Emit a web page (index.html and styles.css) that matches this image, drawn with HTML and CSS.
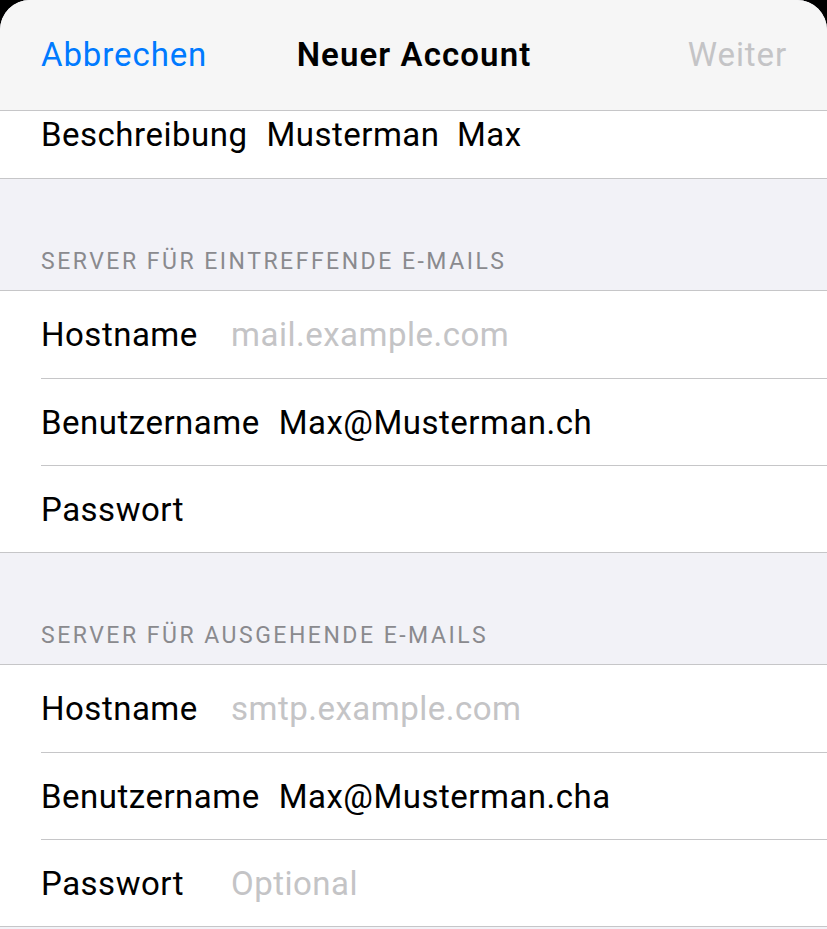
FILE: index.html
```html
<!DOCTYPE html>
<html lang="de">
<head>
<meta charset="utf-8">
<title>Neuer Account</title>
<link rel="stylesheet" href="styles.css">
</head>
<body>
<div class="sheet">
  <header class="nav">
    <span class="nav-btn nav-cancel">Abbrechen</span>
    <span class="nav-title">Neuer Account</span>
    <span class="nav-btn nav-next">Weiter</span>
  </header>
  <main class="list">
    <section class="group group-scrolled">
      <div class="row">
        <span class="label">Beschreibung</span>
        <span class="value">Musterman  Max</span>
      </div>
    </section>

    <div class="section-header">SERVER FÜR EINTREFFENDE E-MAILS</div>
    <section class="group">
      <div class="row">
        <span class="label">Hostname</span>
        <span class="value placeholder">mail.example.com</span>
      </div>
      <div class="row">
        <span class="label">Benutzername</span>
        <span class="value">Max@Musterman.ch</span>
      </div>
      <div class="row">
        <span class="label">Passwort</span>
        <span class="value"></span>
      </div>
    </section>

    <div class="section-header">SERVER FÜR AUSGEHENDE E-MAILS</div>
    <section class="group">
      <div class="row">
        <span class="label">Hostname</span>
        <span class="value placeholder">smtp.example.com</span>
      </div>
      <div class="row">
        <span class="label">Benutzername</span>
        <span class="value">Max@Musterman.cha</span>
      </div>
      <div class="row">
        <span class="label">Passwort</span>
        <span class="value placeholder">Optional</span>
      </div>
    </section>
  </main>
</div>
</body>
</html>
```
FILE: styles.css
```css
* { box-sizing: border-box; }
html, body {
  margin: 0;
  padding: 0;
  background: #000;
  height: 100%;
}
body {
  font-family: "Roboto", "Inter", "Liberation Sans", sans-serif;
  -webkit-font-smoothing: antialiased;
}
.sheet {
  height: 929px;
  background: #f2f2f7;
  border-radius: 30px 30px 0 0;
  overflow: hidden;
  display: flex;
  flex-direction: column;
}
.nav {
  height: 111px;
  flex: none;
  background: #f6f6f6;
  border-bottom: 1px solid #c6c6c8;
  display: grid;
  grid-template-columns: 1fr auto 1fr;
  align-items: center;
  padding: 0 40px 2px 41px;
  font-size: 33px;
  letter-spacing: 0.9px;
}
.nav-btn { color: #007aff; }
.nav-next { color: #c4c4c6; justify-self: end; }
.nav-title { font-weight: 600; color: #000; letter-spacing: 1.1px; }
.list {
  flex: 1;
  overflow: hidden;
}
.group {
  background: #fff;
  border-top: 1px solid #c6c6c8;
  border-bottom: 1px solid #c6c6c8;
}
.group-scrolled {
  border-top: none;
  margin-top: -20px;
}
.row {
  height: 87px;
  display: flex;
  align-items: center;
  gap: 19px;
  margin-left: 41px;
  font-size: 33px;
  letter-spacing: 0.5px;
  color: #000;
  white-space: pre;
}
.row + .row { border-top: 1px solid #c6c6c8; }
.label { min-width: 171px; }
.placeholder { color: #c4c4c6; }
.section-header {
  padding: 69px 41px 14px;
  font-size: 23px;
  line-height: 28px;
  letter-spacing: 2.5px;
  color: #8a8a8e;
}
```
